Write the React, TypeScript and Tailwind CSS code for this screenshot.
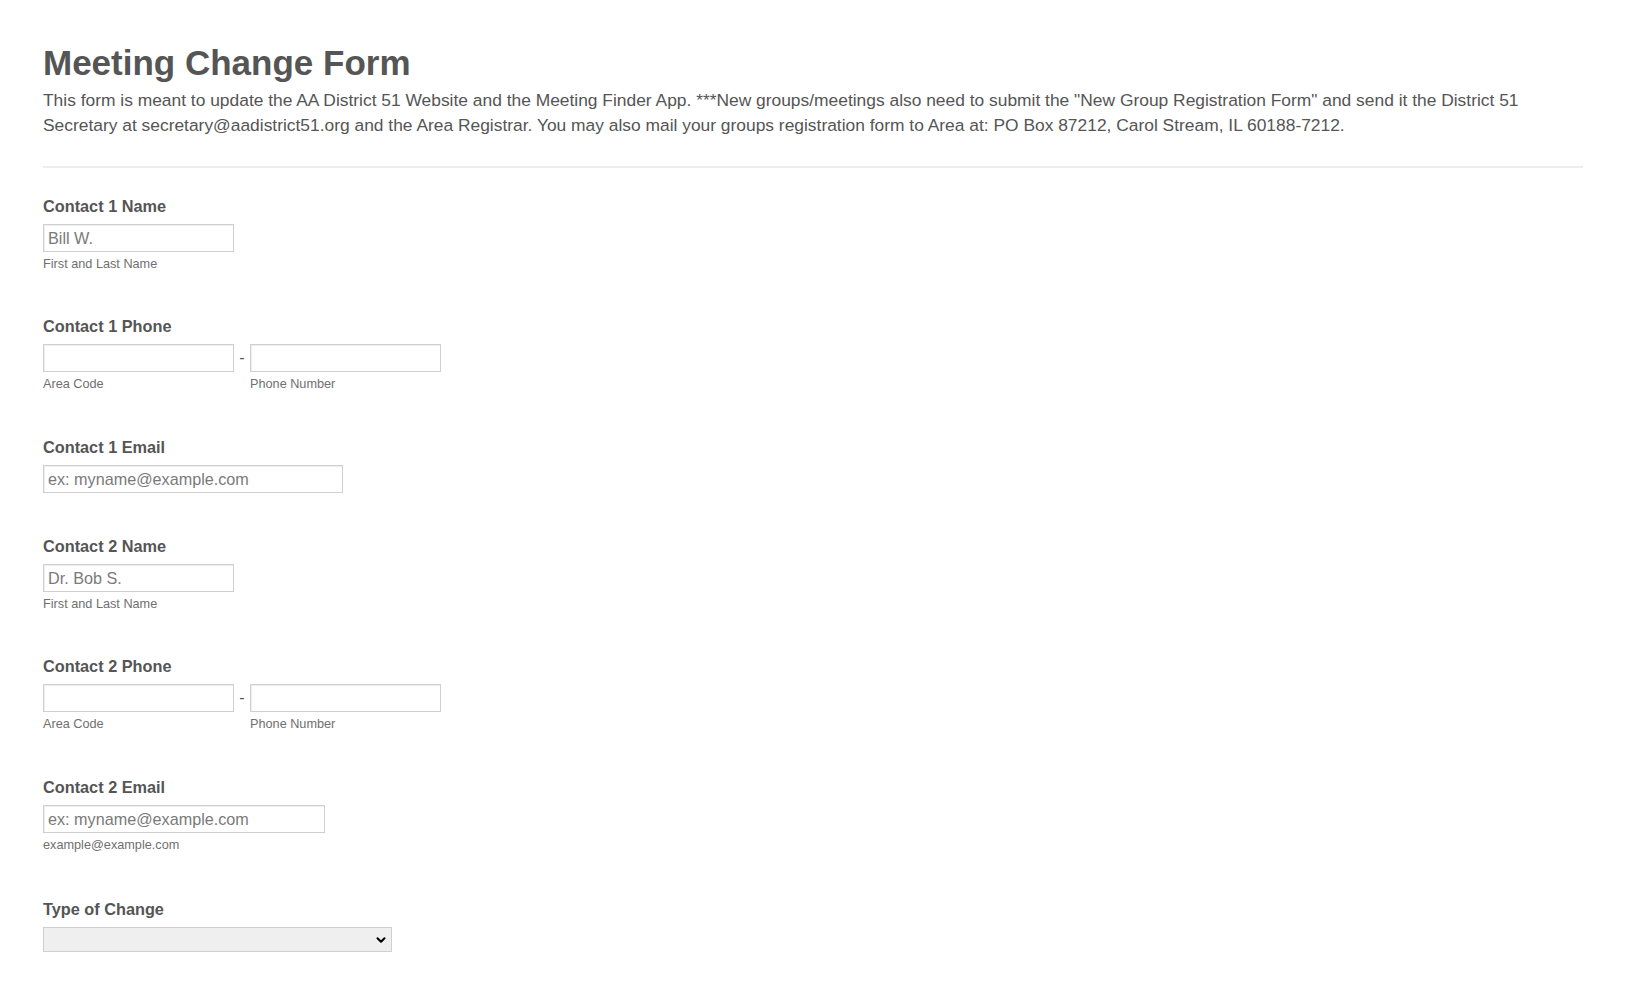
import { ChevronDown } from "lucide-react";

const font = { fontFamily: '"Liberation Sans", Arial, sans-serif' };

function Label({ children }: { children: React.ReactNode }) {
  return (
    <div className="text-[16.3px] font-bold leading-[20px] text-[#555]">
      {children}
    </div>
  );
}

function Sub({ children }: { children: React.ReactNode }) {
  return (
    <div className="mt-[3px] text-[12.7px] leading-[18px] text-[#6f6f6f]">
      {children}
    </div>
  );
}

function TextBox({ placeholder, width }: { placeholder?: string; width: string }) {
  return (
    <input
      type="text"
      placeholder={placeholder}
      className={`h-[28px] ${width} border border-[#d0d0d0] bg-white px-[4px] text-[16.2px] text-[#555] placeholder:text-[#7a7a7a] shadow-[inset_1px_1px_0_#eee] outline-none`}
    />
  );
}

function NameField({ label, placeholder }: { label: string; placeholder: string }) {
  return (
    <div className="pb-[43px]">
      <Label>{label}</Label>
      <div className="mt-[8px]">
        <TextBox placeholder={placeholder} width="w-[191px]" />
      </div>
      <Sub>First and Last Name</Sub>
    </div>
  );
}

function PhoneField({ label }: { label: string }) {
  return (
    <div className="pb-[44px]">
      <Label>{label}</Label>
      <div className="mt-[8px] flex items-start">
        <div>
          <TextBox width="w-[191px]" />
          <Sub>Area Code</Sub>
        </div>
        <span className="w-[16px] text-center text-[16px] leading-[28px] text-[#555]">-</span>
        <div>
          <TextBox width="w-[191px]" />
          <Sub>Phone Number</Sub>
        </div>
      </div>
    </div>
  );
}

export default function App() {
  return (
    <div className="min-h-screen bg-white" style={font}>
      <div className="ml-[43px] mr-[45px] pt-[41px]">
        <h1 className="text-[35px] font-bold leading-[44px] text-[#555]">
          Meeting Change Form
        </h1>
        <p className="mt-[3px] text-[17.4px] leading-[25px] text-[#555]">
          This form is meant to update the AA District 51 Website and the Meeting Finder App. ***New
          groups/meetings also need to submit the "New Group Registration Form" and send it the
          District 51 Secretary at secretary@aadistrict51.org and the Area Registrar. You may also
          mail your groups registration form to Area at: PO Box 87212, Carol Stream, IL 60188-7212.
        </p>
        <div className="mt-[28px] h-[2px] bg-[#eee]" />

        <div className="pt-[28px]">
          <NameField label="Contact 1 Name" placeholder="Bill W." />
          <PhoneField label="Contact 1 Phone" />
          <div className="pb-[43px]">
            <Label>Contact 1 Email</Label>
            <div className="mt-[8px]">
              <TextBox placeholder="ex: myname@example.com" width="w-[300px]" />
            </div>
          </div>
          <NameField label="Contact 2 Name" placeholder="Dr. Bob S." />
          <PhoneField label="Contact 2 Phone" />
          <div className="pb-[45px]">
            <Label>Contact 2 Email</Label>
            <div className="mt-[8px]">
              <TextBox placeholder="ex: myname@example.com" width="w-[282px]" />
            </div>
            <Sub>example@example.com</Sub>
          </div>
          <div>
            <Label>Type of Change</Label>
            <div className="relative mt-[8px] w-[349px]">
              <select className="h-[25px] w-full appearance-none border border-[#d0d0d0] bg-[#efefef] px-[5px] text-[14px] text-[#555] outline-none">
                <option value=""></option>
              </select>
              <ChevronDown
                className="pointer-events-none absolute right-[4px] top-[6px] h-[14px] w-[14px] text-black"
                strokeWidth={3.5}
              />
            </div>
          </div>
        </div>
      </div>
    </div>
  );
}
